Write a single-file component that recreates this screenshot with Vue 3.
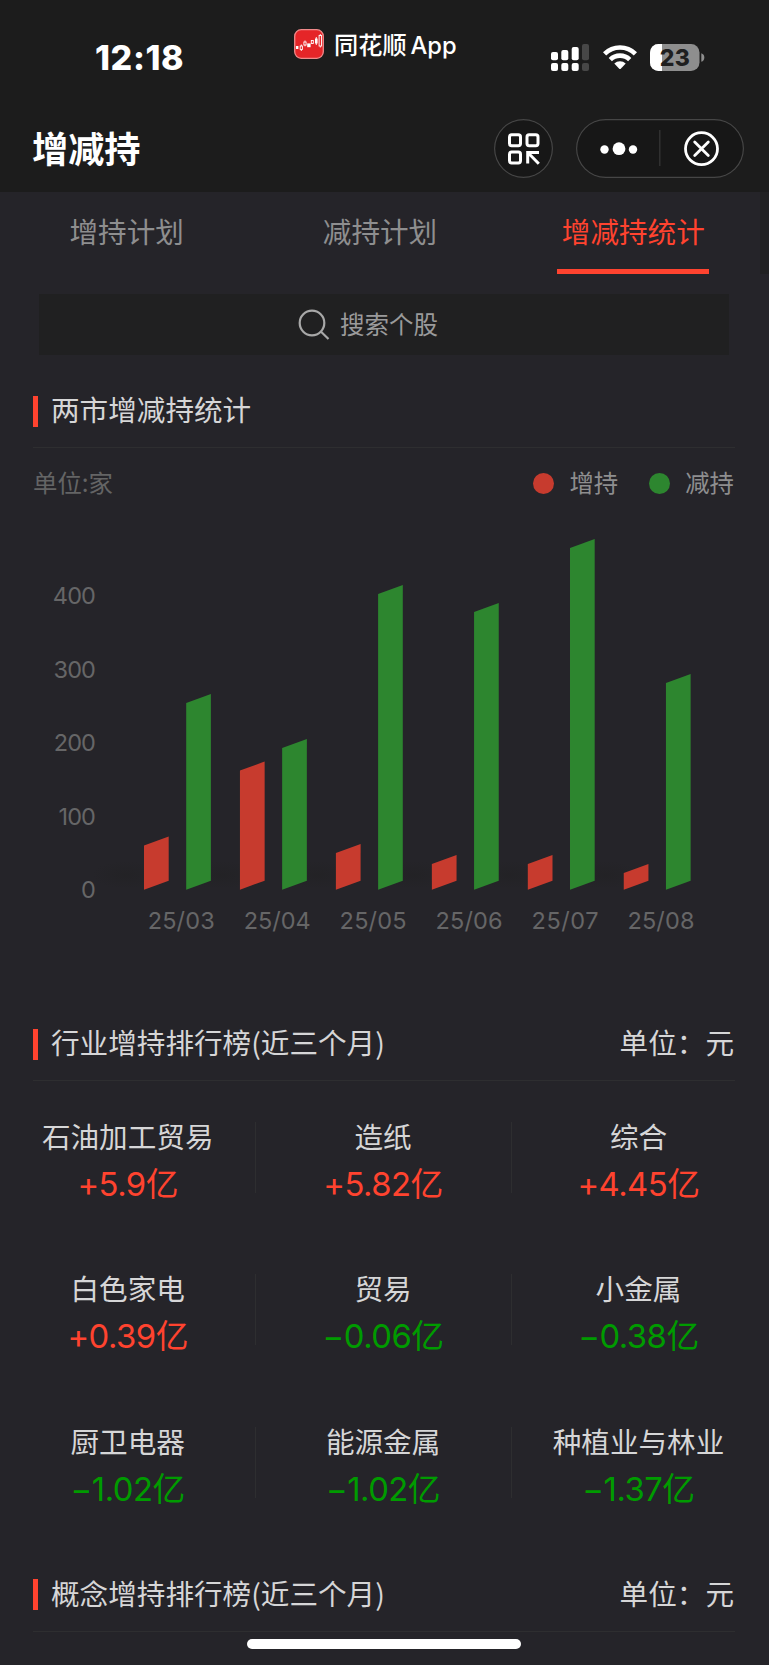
<script setup>
const tabs = [
  { label: '增持计划', active: false },
  { label: '减持计划', active: false },
  { label: '增减持统计', active: true },
]

// Chart geometry: x is the left edge of a group, up/down are the bars' left top edges.
const baseY = 369.7
const slant = 9
const barWidth = 24.7
const months = [
  { label: '25/03', up: 325.5, down: 183 },
  { label: '25/04', up: 250.5, down: 228 },
  { label: '25/05', up: 333, down: 74 },
  { label: '25/06', up: 344, down: 92 },
  { label: '25/07', up: 344, down: 28 },
  { label: '25/08', up: 353, down: 163 },
].map((m, i) => ({ ...m, x: 144 + i * 95.95 }))
const ticks = [400, 300, 200, 100, 0].map((value, i) => ({ value, y: 84.3 + i * 73.5 }))

const bar = (x, top) =>
  `${x},${top} ${x + barWidth},${top - slant} ${x + barWidth},${baseY - slant} ${x},${baseY}`

const industries = [
  { name: '石油加工贸易', value: '+5.9亿' },
  { name: '造纸', value: '+5.82亿' },
  { name: '综合', value: '+4.45亿' },
  { name: '白色家电', value: '+0.39亿' },
  { name: '贸易', value: '−0.06亿' },
  { name: '小金属', value: '−0.38亿' },
  { name: '厨卫电器', value: '−1.02亿' },
  { name: '能源金属', value: '−1.02亿' },
  { name: '种植业与林业', value: '−1.37亿' },
]
</script>

<template>
  <div class="screen">
    <header class="top">
      <div class="status">
        <span class="time">12:18</span>
        <div class="source">
          <svg class="app-icon" width="30" height="30" viewBox="0 0 30 30">
            <rect x=".7" y=".7" width="28.6" height="28.6" rx="6.5" fill="#e52528" stroke="#f08a8a" stroke-width="1.3" />
            <g stroke="#fff" stroke-width=".9" fill="none">
              <path d="M2 18.5h2.4" stroke-width="3" />
              <rect x="6.2" y="17" width="2.2" height="3.4" />
              <path d="M7.3 15.5v1.5M7.3 20.4v1.6M11 11.5v1.4M11 16v1.3" />
              <rect x="9.9" y="13" width="2.2" height="3" />
              <path d="M13.2 16.3h3.4" stroke-width="3.8" />
              <rect x="17.3" y="11.5" width="2" height="3" />
              <path d="M22.3 9.5v5" stroke-width="2.6" />
              <path d="M22.3 8v8M26.3 5v1.5M26.3 17v1.5" />
              <rect x="25.1" y="6.5" width="2.4" height="10.5" />
            </g>
          </svg>
          <span class="source-name">同花顺<span class="latin">App</span></span>
        </div>
        <div class="indicators">
          <svg width="39" height="28" viewBox="0 0 39 28">
            <g fill="#fff">
              <rect x="0" y="8" width="7" height="8.2" rx="2" /><rect x="10.3" y="6" width="7" height="10.2" rx="2" />
              <rect x="20.7" y="3" width="7" height="13.2" rx="2" />
              <rect x="0" y="19" width="7" height="8" rx="2" /><rect x="10.3" y="19" width="7" height="8" rx="2" />
              <rect x="20.7" y="19" width="7" height="8" rx="2" />
            </g>
            <g fill="#474747"><rect x="31" y="0" width="7" height="16.2" rx="2" /><rect x="31" y="19" width="7" height="8" rx="2" /></g>
          </svg>
          <svg class="wifi" width="34" height="25" viewBox="0 0 34 25">
            <g fill="none" stroke="#fff" stroke-width="4.6">
              <path d="M1.6 8.8A22 22 0 0 1 32.4 8.8" />
              <path d="M7.3 14.6A13.8 13.8 0 0 1 26.7 14.6" />
            </g>
            <path d="M11.3 18.5A8.2 8.2 0 0 1 22.7 18.5L18 23.6Q17 24.6 16 23.6Z" fill="#fff" />
          </svg>
          <svg class="battery" width="55" height="28" viewBox="0 0 55 28">
            <defs><clipPath id="battery-level"><rect width="12" height="28" /></clipPath></defs>
            <rect width="49.5" height="27" rx="8.5" fill="#8e8e8e" />
            <rect width="49.5" height="27" rx="8.5" fill="#fff" clip-path="url(#battery-level)" />
            <path d="M51.3 9.2q3 1 3 4.3t-3 4.3Z" fill="#8e8e8e" />
            <text x="24.8" y="21.7" text-anchor="middle" textLength="30" class="battery-text">23</text>
          </svg>
        </div>
      </div>
      <div class="navbar">
        <h1>增减持</h1>
        <div class="round">
          <svg width="59" height="59" viewBox="0 0 59 59" fill="none" stroke="#fff" stroke-width="3">
            <rect x="15.5" y="15.7" width="11" height="11" rx="2.2" />
            <rect x="33" y="15.7" width="11" height="11" rx="2.2" />
            <rect x="15.5" y="33" width="11" height="11" rx="2.2" />
            <path d="M45 33.5H33.7V44.5M34.5 34.3L44.8 44.7" />
          </svg>
        </div>
        <div class="capsule">
          <svg width="168" height="59" viewBox="0 0 168 59">
            <circle cx="28.5" cy="30.5" r="4.2" fill="#fff" /><circle cx="43" cy="29.7" r="6.4" fill="#fff" />
            <circle cx="57" cy="30.5" r="4.2" fill="#fff" />
            <path d="M83.8 11v36" stroke="#363636" stroke-width="1.3" />
            <g fill="none" stroke="#fff" stroke-width="2.8">
              <circle cx="125.5" cy="29.7" r="16" />
              <path d="M118.7 22.9l13.6 13.6M132.3 22.9l-13.6 13.6" stroke-linecap="round" />
            </g>
          </svg>
        </div>
      </div>
    </header>

    <nav class="tabs">
      <div v-for="tab in tabs" :key="tab.label" class="tab" :class="{ active: tab.active }">
        <span>{{ tab.label }}</span>
      </div>
    </nav>

    <div class="search">
      <svg width="32" height="32" viewBox="0 0 32 32" fill="none" stroke="#a8a8a8" stroke-width="2.2">
        <circle cx="14" cy="14" r="12.3" /><path d="M22.8 22.5L30.5 30" />
      </svg>
      <span>搜索个股</span>
    </div>

    <section class="stats">
      <div class="heading"><h2><span>两市增减持统计</span></h2></div>
      <div class="legend">
        <span class="unit">单位:家</span>
        <i class="dot up"></i><span class="key">增持</span>
        <i class="dot down"></i><span>减持</span>
      </div>
      <svg class="chart" width="769" height="440" viewBox="0 0 769 440">
        <defs>
          <radialGradient id="floor"><stop offset="0" stop-color="#202021" stop-opacity=".45" /><stop offset="1" stop-color="#202021" stop-opacity="0" /></radialGradient>
        </defs>
        <ellipse v-for="m in months" :key="'f' + m.x" :cx="m.x - 18" cy="355" rx="34" ry="14" fill="url(#floor)" />
        <text v-for="t in ticks" :key="t.value" x="95" :y="t.y" text-anchor="end" class="tick">{{ t.value }}</text>
        <g v-for="m in months" :key="m.label">
          <polygon :points="bar(m.x, m.up)" fill="#c73b2e" />
          <polygon :points="bar(m.x + 42.2, m.down)" fill="#2d862f" />
          <text :x="m.x + 3.7" y="409" textLength="67" class="month">{{ m.label }}</text>
        </g>
      </svg>
    </section>

    <section class="ranking">
      <div class="heading"><h2><span>行业增持排行榜(近三个月)</span></h2><span>单位：元</span></div>
      <div class="grid">
        <div v-for="item in industries" :key="item.name" class="cell">
          <div class="name">{{ item.name }}</div>
          <div class="value" :class="item.value.startsWith('+') ? 'gain' : 'loss'">{{ item.value }}</div>
        </div>
      </div>
    </section>

    <section class="concept">
      <div class="heading"><h2><span>概念增持排行榜(近三个月)</span></h2><span>单位：元</span></div>
    </section>
    <div class="home-bar"></div>
  </div>
</template>

<style>
body { margin: 0; background: #252429; }
</style>

<style scoped>
.screen {
  display: flex;
  flex-direction: column;
  width: 769px;
  height: 1665px;
  overflow: hidden;
  background: #252429;
  color: #d6d6d7;
  font-family: "Noto Sans CJK SC", sans-serif;
  font-size: 28.6px;
}
svg { display: block; flex: none; }
h1, h2 { margin: 0; font: inherit; }
.top { height: 192px; flex: none; background: #1c1c1c; color: #fff; }
.status { display: flex; height: 119px; align-items: flex-start; }
.time {
  width: 199px;
  padding: 37px 0 0 95px;
  font: 800 34px/42px Inter, sans-serif;
  letter-spacing: 0.6px;
}
.source { display: flex; padding-top: 29px; height: 30px; align-items: center; width: 257px; }
.source-name { margin: 1px 0 0 10px; font-size: 24.2px; font-weight: 500; line-height: 28px; white-space: nowrap; }
.latin { margin-left: 4px; font-family: Inter, sans-serif; font-size: 23.7px; }
.indicators { display: flex; padding-top: 44px; }
.wifi { margin: 1px 0 0 13px; }
.battery { margin-left: 13px; }
.battery-text { font: 800 23px Inter, sans-serif; fill: #1f1f1f; }
.navbar { display: flex; height: 60px; padding-left: 32px; }
h1 { width: 462px; font-size: 36.2px; font-weight: 700; line-height: 57px; }
.round, .capsule { box-sizing: border-box; height: 59px; border-radius: 30px; background: #171717; box-shadow: inset 0 0 0 1.2px #464646; }
.round { width: 59px; }
.capsule { width: 168px; margin-left: 23px; }
.tabs { display: flex; height: 82px; flex: none; border-right: 9px solid #212122; color: #8e8e8f; }
.tab { flex: 1; display: flex; justify-content: center; }
.tab span { box-sizing: border-box; height: 82px; padding: 0 4.5px; line-height: 78px; white-space: nowrap; }
.tab.active { color: #ff432f; }
.tab.active span { border-bottom: 5px solid #ff432f; }
.search {
  display: flex; flex: none; justify-content: center; align-items: center;
  width: 690px; height: 61px; margin: 20px 0 0 39px; padding-right: 32px; box-sizing: border-box;
  background: #202021; color: #9a9a9b; font-size: 24.5px; line-height: 59px;
}
.search span { margin: 0 0 2px 10px; }
.heading {
  display: flex; align-items: center; justify-content: space-between;
  height: 73px; margin: 0 34px 0 33px; border-bottom: 1px solid #2e2e30; line-height: 70px; white-space: nowrap;
}
.heading span { margin-bottom: 3px; }
.heading > span { margin-right: 1px; }
.heading h2 { display: flex; align-items: center; }
.heading h2::before { content: ""; width: 5px; height: 31px; margin: 1px 13px 0 0; background: #ff432f; }
.stats { flex: none; padding-top: 19px; }
.legend { display: flex; align-items: center; height: 72px; padding: 0 35px 0 33px; color: #8e8e8f; font-size: 24.4px; line-height: 68px; }
.legend span { margin-bottom: 4px; }
.legend .unit { margin-right: auto; color: #646465; }
.dot { width: 21px; height: 21px; border-radius: 50%; margin: 0 15px 1px 0; }
.key { margin-right: 31px; }
.up { background: #c73b2e; }
.down { background: #2d862f; }
.tick, .month { font: 400 23.5px Inter, sans-serif; fill: #666667; }
.tick { letter-spacing: -0.9px; }
.ranking { flex: none; padding-top: 47px; }
.grid { display: grid; grid-template-columns: repeat(3, 255.4px); row-gap: 81.4px; padding-top: 41px; }
.cell { height: 71px; text-align: center; white-space: nowrap; }
.cell:not(:nth-child(3n)) { box-shadow: 1px 0 #2e2e30; }
.name { height: 31px; line-height: 27px; }
.value { height: 40px; line-height: 40px; margin-top: 11px; font-family: Inter, "Noto Sans CJK SC", sans-serif; font-size: 32.8px; font-weight: 400; letter-spacing: -0.5px; }
.gain { color: #ff432f; }
.loss { color: #009b00; }
.concept { flex: none; padding-top: 60px; }
.home-bar { width: 274px; height: 10px; margin: 7px 0 0 247px; border-radius: 5px; background: #fff; flex: none; }
</style>
